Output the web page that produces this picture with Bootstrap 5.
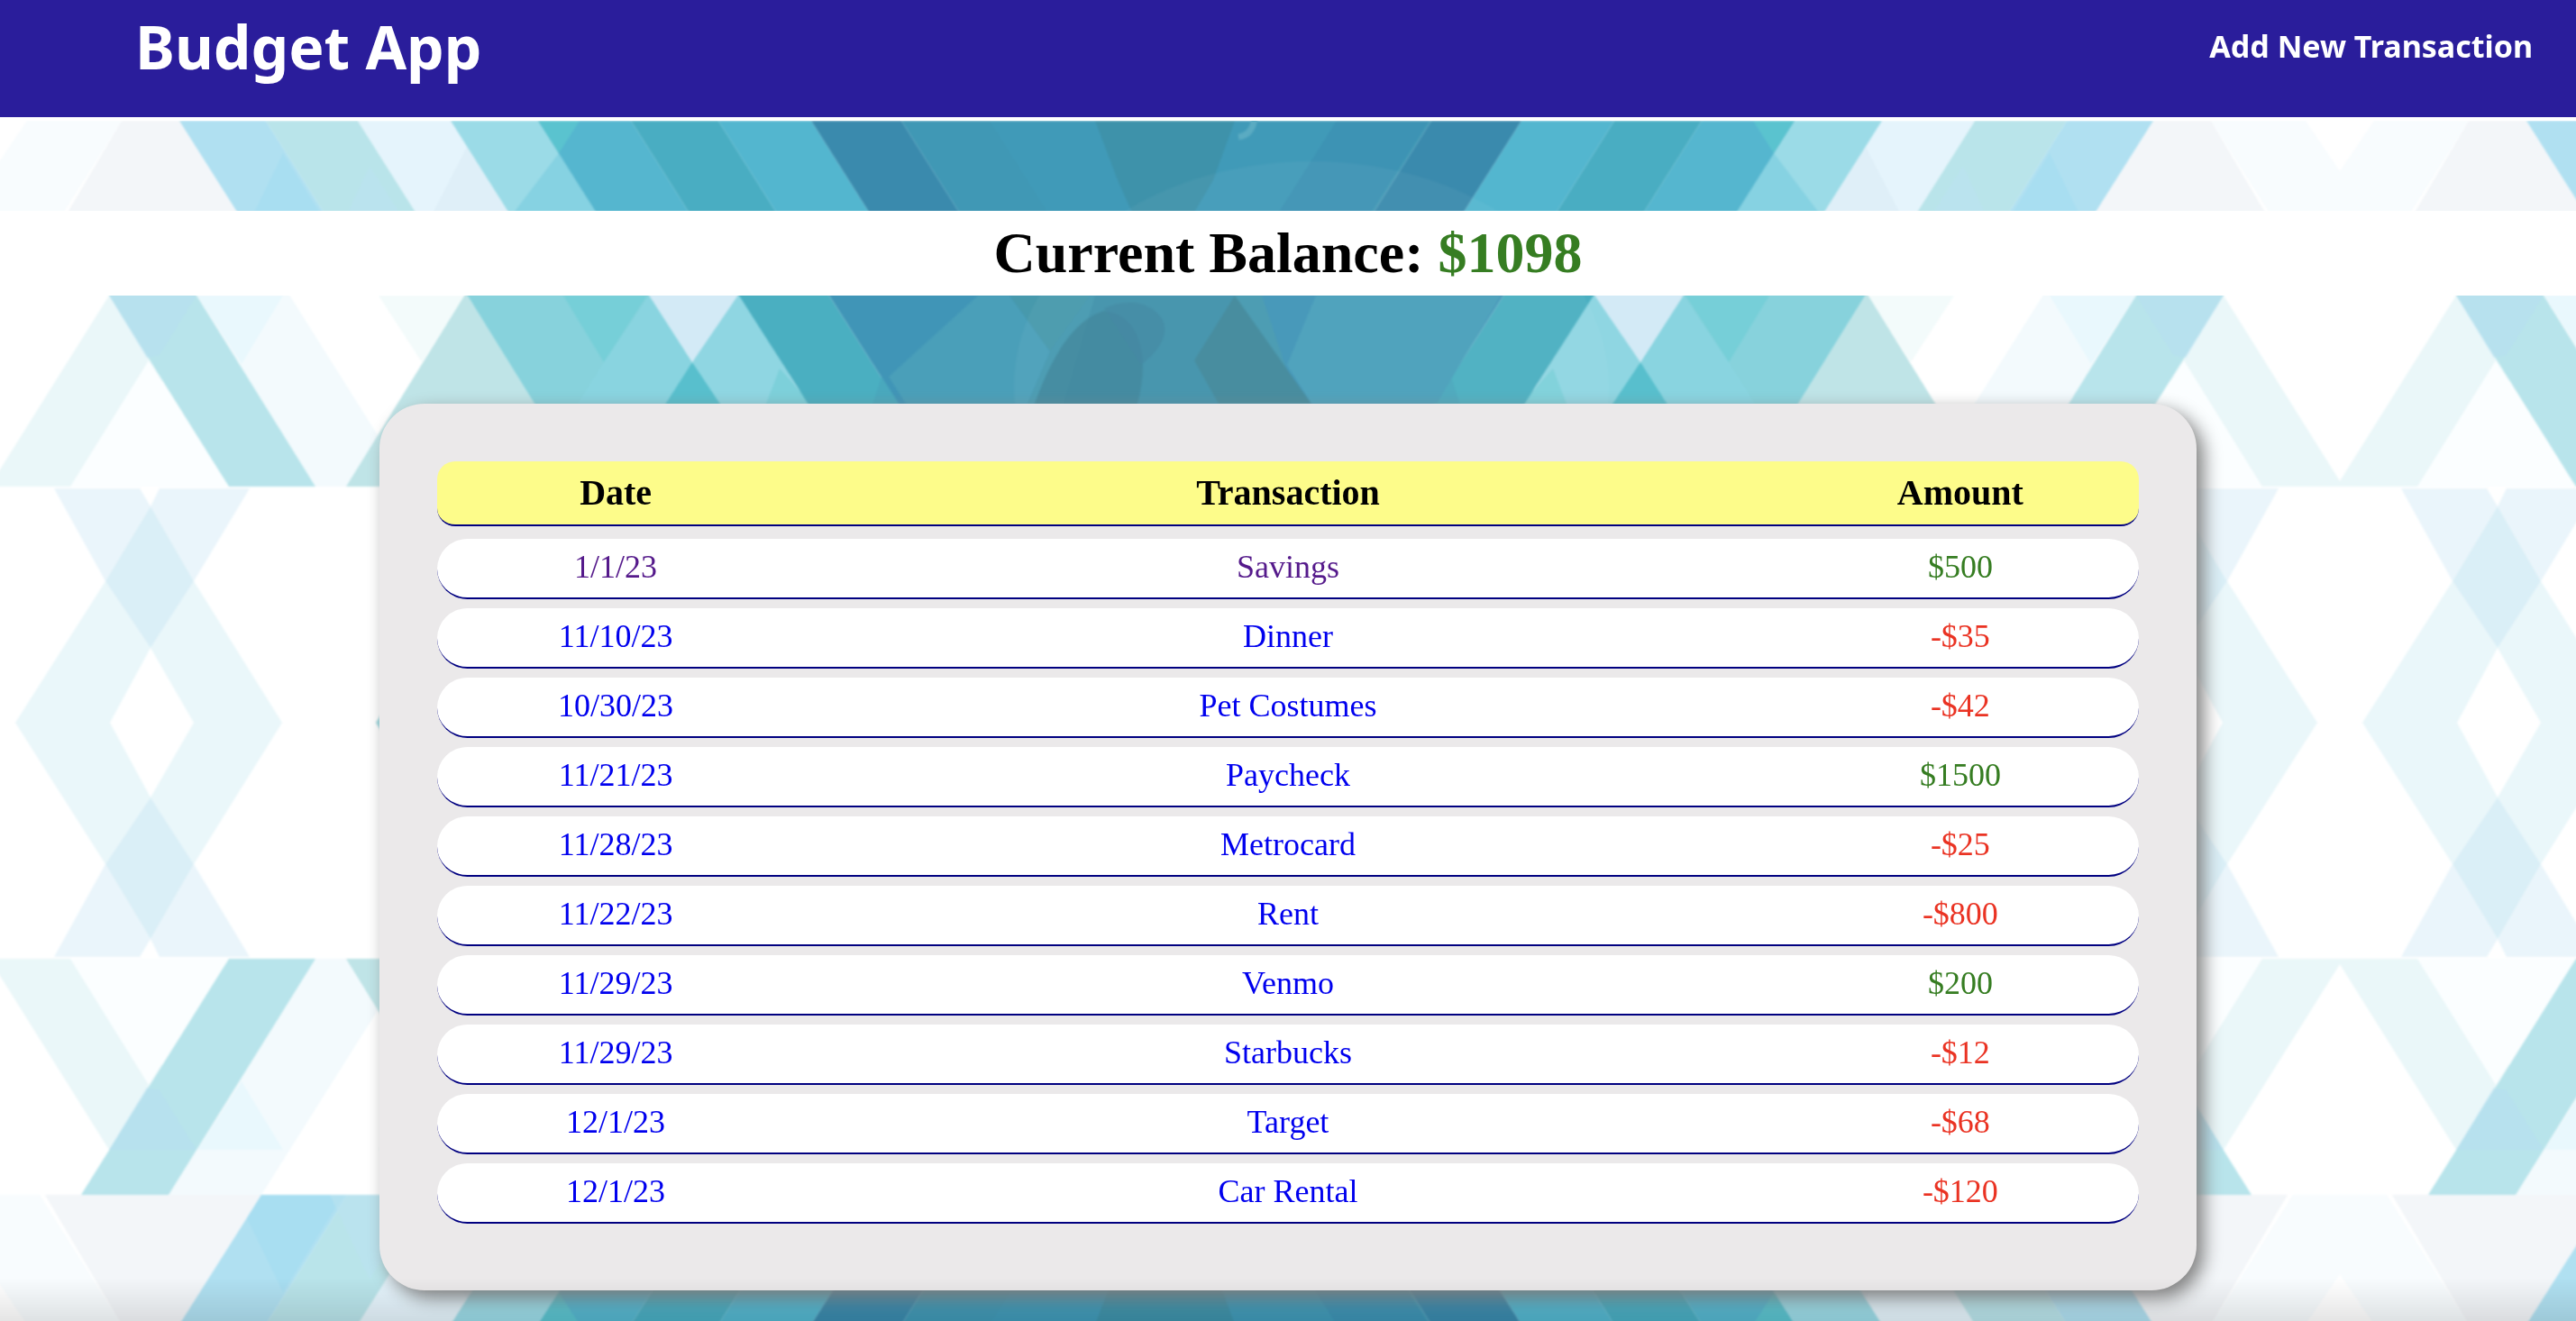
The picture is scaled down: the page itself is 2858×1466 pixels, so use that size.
<!DOCTYPE html>
<html lang="en">
<head>
<meta charset="utf-8">
<meta name="viewport" content="width=device-width, initial-scale=1">
<title>Budget App</title>
<link href="https://cdn.jsdelivr.net/npm/bootstrap@5.3.0/dist/css/bootstrap.min.css" rel="stylesheet">
<style>
  body { font-family: "Liberation Serif", "Times New Roman", serif; color: #000; background: transparent; }
  .backdrop { position: fixed; inset: 0; width: 100%; height: 100%; z-index: -1; }
  .topbar { background: #2a1d9b; height: 134px; border-bottom: 4px solid #fff; padding: 0 48px 28px 150px; font-family: "Noto Sans", sans-serif; }
  .topbar a { color: #fff; text-decoration: none; font-weight: 700; }
  .app-title { font-size: 66px; line-height: 80px; }
  .add-link { font-size: 34px; line-height: 48px; }
  .balance { margin: 100px 0 120px; padding: 10px 0; background: #fff; font-size: 64px; line-height: 74px; font-weight: 700; text-align: center; }
  .ledger-page { min-height: calc(100vh - 134px); display: flow-root; }
  .ledger-card { width: 70.55%; padding: 64px 64px 74px; border-radius: 50px; background: #ebe9ea; box-shadow: 8px 8px 20px gray; }
  .ledger, .ledger thead, .ledger tbody { display: block; }
  .ledger tr { display: grid; grid-template-columns: 21fr 58fr 21fr; align-items: center; text-align: center; border-bottom: 2px solid navy; }
  .ledger thead tr { height: 72px; border-radius: 20px; background: #fdfc8a; font-size: 40px; line-height: 46px; margin-bottom: 14px; }
  .ledger tbody tr { height: 67px; padding-bottom: 3px; border-radius: 40px; background: #fff; font-size: 36px; line-height: 42px; }
  .ledger tbody tr + tr { margin-top: 10px; }
  .ledger a { color: #0000ee; text-decoration: none; }
  .ledger a.seen { color: #551a8b; }
  .gain { color: #367d22; }
  .spend { color: #ea3323; }
  .bottom-shade { height: 48px; pointer-events: none; background: linear-gradient(transparent, rgba(0,0,0,.1)); }
</style>
</head>
<body>
<svg class="backdrop" viewBox="0 0 2858 1466" preserveAspectRatio="xMidYMin slice" aria-hidden="true">
  <defs>
    <!-- left half of the top quarter: three bands of slanted strips -->
    <g id="half">
      <path fill="#f8fcfe" d="M30 134H135L44 278H-8V190z"/>
      <path fill="#f3f6f9" d="M135 134H199L290 278H50z"/>
      <path fill="#b0e0f1" d="M199 134H295L386 278H290z"/>
      <path fill="#b9e4ea" d="M295 134H397L488 278H386z"/>
      <path fill="#a5ddf1" d="M314 170L368 257L382 278H290L274 252z" opacity=".7"/>
      <path fill="#bbe2f0" d="M410 184L470 278H366z" opacity=".6"/>
      <path fill="#e5f4fc" d="M397 134H500L591 278H488z"/>
      <path fill="#dfeff8" d="M518 163L591 278H488L472 252z"/>
      <path fill="#9bdbe7" d="M500 134H597L688 278H591z"/>
      <path fill="#86d2e2" d="M620 170L688 278H591L567 240z"/>
      <path fill="#55b6cf" d="M597 134H700L791 278H688z"/>
      <path fill="#5ac3cf" d="M597 134H643L620 170z"/>
      <path fill="#49adc2" d="M700 134H797L888 278H791z"/>
      <path fill="#53b6cf" d="M797 134H900L991 278H888z"/>
      <path fill="#3a8aad" d="M900 134H1000L1091 278H991z"/>
      <path fill="#4098b5" d="M1000 134H1300V278H1091z"/>

      <path fill="#eaf7f9" d="M121 328L180 422L106 540H-8V534z"/>
      <path fill="#fbfeff" d="M165 400L254 540H78z"/>
      <path fill="#f3fafd" d="M187 278H290L455 540H350z"/>
      <path fill="#f3fbfb" d="M420 328H515L468 402z"/>
      <path fill="#e9f8fd" d="M219 328H314L268 404z"/>
      <path fill="#b8e4eb" d="M90 278H187L350 540H254z"/>
      <path fill="#b5dff0" d="M121 328H218L177 394L163 397z" opacity=".6"/>
      <path fill="#bfe4e7" d="M517 325L650 540H384z"/>
      <path fill="#87d2dc" d="M488 278H690L768 402L730 540H650L515 322z"/>
      <path fill="#76cfd8" d="M625 328H718L670 402z"/>
      <path fill="#8bd6e2" d="M720 328L768 402L740 448H700L670 402zM670 402L700 448H641z" opacity=".6"/>
      <path fill="#d3eaf6" d="M688 278H791L822 328L768 402z"/>
      <path fill="#8fd6e2" d="M820 326L953 540H840L768 402z"/>
      <path fill="#58bfcd" d="M768 402L860 540H680z"/>
      <path fill="#7dd0da" d="M865 409L900 448L930 500H830z"/>
      <path fill="#4aafc1" d="M789 278H888L1055 540H955L820 328z"/>
      <path fill="#4095b7" d="M888 278H1300V540H1055L920 328z"/>
      <path fill="#49a8bd" d="M978 418L1015 476L955 490z"/>

      <path fill="#eaf5fb" d="M60 542H155L167 562L117 645zM177 542H277L215 645L167 562z"/>
      <path fill="#eaf7fa" d="M17 802L117 645L167 719L122 802zM215 645L313 802H215L167 719z"/>
      <path fill="#daeff7" d="M167 562L215 645L167 719L117 645z"/>
      <path fill="#9fd9df" d="M417 802L560 576H1300V802z"/>
    </g>
    <g id="quarter">
      <rect x="-8" y="134" width="2604" height="668" fill="#fff"/>
      <use href="#half"/>
      <use href="#half" transform="translate(2588) scale(-1 1)"/>
      <!-- middle of the pattern -->
      <path fill="#409ab8" d="M1098 134H1483L1392 278H1189z"/>
      <path fill="#3e92aa" d="M1215 134H1370L1346 200L1300 278H1275L1240 200z"/>
      <path fill="#3d93b4" d="M1483 134H1585L1494 278H1392z"/>
      <path fill="#4a9fb9" d="M986 418L1085 328H1120L1165 390L1140 448H1005z"/>
      <path fill="#4799ac" d="M1120 328H1210L1165 390z"/>
      <path fill="#4599b0" d="M1165 390L1210 328H1400L1440 448H1140z"/>
      <path fill="#4092ab" d="M1215 328H1370L1330 400L1352 448H1180z"/>
      <path fill="#3b7f95" opacity=".65" d="M1225 345C1190 355 1165 400 1148 448V500H1262V448C1275 400 1268 350 1225 345z"/>
      <path fill="#3d84a0" d="M1225 342Q1270 325 1290 355Q1300 378 1266 405z" opacity=".6"/>
      <path fill="#40889b" d="M1370 328L1455 448H1352L1325 400z"/>
      <path fill="#499fbb" d="M1460 328H1665L1594 448H1455L1428 405z"/>
      <ellipse cx="1455" cy="429" rx="330" ry="250" fill="#fff" opacity=".045"/>
    </g>
    <g id="tile">
      <use href="#quarter"/>
      <use href="#quarter" transform="translate(0 1604) scale(1 -1)"/>
    </g>
  </defs>
  <rect width="2858" height="1466" fill="#fff"/>
  <g style="filter: blur(1px)">
    <use href="#tile"/>
    <use href="#tile" transform="translate(2604)"/>
    <path d="M1392 130Q1390 150 1374 152" fill="none" stroke="#5aabc2" stroke-width="7"/>
  </g>
</svg>

<nav class="topbar d-flex justify-content-between align-items-center">
  <a class="app-title" href="#">Budget App</a>
  <a class="add-link" href="#">Add New Transaction</a>
</nav>

<main class="ledger-page">
  <h1 class="balance">Current Balance: <span class="gain">$1098</span></h1>
  <section class="ledger-card mx-auto">
    <table class="ledger">
      <thead><tr><th>Date</th><th>Transaction</th><th>Amount</th></tr></thead>
      <tbody>
        <tr><td><a class="seen" href="#">1/1/23</a></td><td><a class="seen" href="#">Savings</a></td><td class="gain">$500</td></tr>
        <tr><td><a href="#">11/10/23</a></td><td><a href="#">Dinner</a></td><td class="spend">-$35</td></tr>
        <tr><td><a href="#">10/30/23</a></td><td><a href="#">Pet Costumes</a></td><td class="spend">-$42</td></tr>
        <tr><td><a href="#">11/21/23</a></td><td><a href="#">Paycheck</a></td><td class="gain">$1500</td></tr>
        <tr><td><a href="#">11/28/23</a></td><td><a href="#">Metrocard</a></td><td class="spend">-$25</td></tr>
        <tr><td><a href="#">11/22/23</a></td><td><a href="#">Rent</a></td><td class="spend">-$800</td></tr>
        <tr><td><a href="#">11/29/23</a></td><td><a href="#">Venmo</a></td><td class="gain">$200</td></tr>
        <tr><td><a href="#">11/29/23</a></td><td><a href="#">Starbucks</a></td><td class="spend">-$12</td></tr>
        <tr><td><a href="#">12/1/23</a></td><td><a href="#">Target</a></td><td class="spend">-$68</td></tr>
        <tr><td><a href="#">12/1/23</a></td><td><a href="#">Car Rental</a></td><td class="spend">-$120</td></tr>
      </tbody>
    </table>
  </section>
</main>
<div class="bottom-shade fixed-bottom"></div>
<script src="https://cdn.jsdelivr.net/npm/bootstrap@5.3.0/dist/js/bootstrap.bundle.min.js"></script>
</body>
</html>
